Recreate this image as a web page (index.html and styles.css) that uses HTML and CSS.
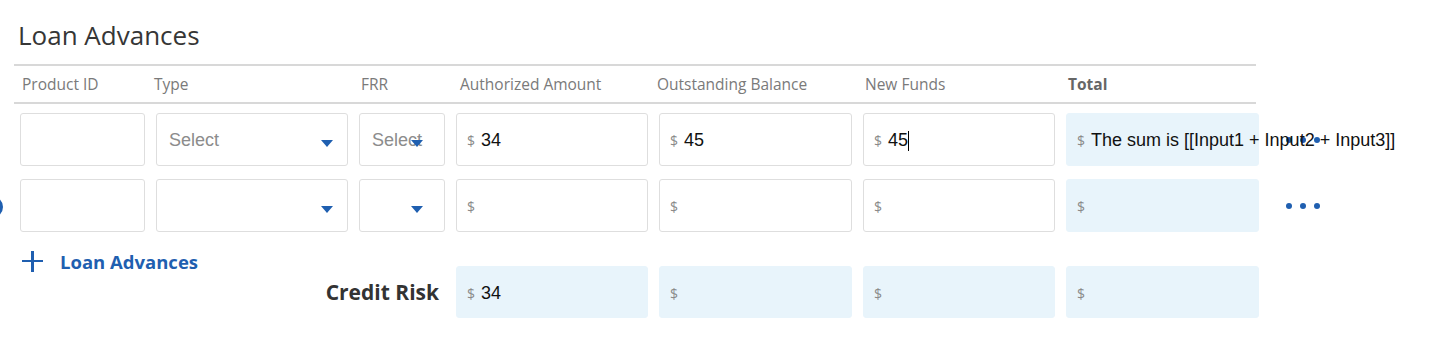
FILE: index.html
```html
<!DOCTYPE html>
<html lang="en">
<head>
  <meta charset="UTF-8" />
  <meta name="viewport" content="width=device-width, initial-scale=1.0"/>
  <title>Loan Advances</title>
  <link rel="stylesheet" href="styles.css">
</head>
<body>
  <div class="page">
    <h2 class="title">Loan Advances</h2>

    <div class="grid head">
      <div>Product ID</div>
      <div class="shift-left">Type</div>
      <div>FRR</div>
      <div class="shift-right">Authorized Amount</div>
      <div class="shift-left">Outstanding Balance</div>
      <div>New Funds</div>
      <div class="strong">Total</div>
    </div>

    <div class="grid row">
      <div class="field"></div>
      <div class="field select"><span class="placeholder">Select</span><span class="arrow"></span></div>
      <div class="field select frr"><span class="placeholder">Select</span><span class="arrow"></span></div>
      <div class="field"><span class="cur">$</span><span class="val">34</span></div>
      <div class="field"><span class="cur">$</span><span class="val">45</span></div>
      <div class="field"><span class="cur">$</span><span class="val">45</span><span class="caret"></span></div>
      <div class="field calc total"><span class="cur">$</span><span class="val">The sum is [[Input1 + Input2 + Input3]]</span></div>
      <div class="more"><span></span><span></span><span></span></div>
    </div>

    <div class="grid row">
      <div class="field with-handle"><span class="handle"></span></div>
      <div class="field select"><span class="arrow"></span></div>
      <div class="field select frr"><span class="arrow"></span></div>
      <div class="field"><span class="cur">$</span></div>
      <div class="field"><span class="cur">$</span></div>
      <div class="field"><span class="cur">$</span></div>
      <div class="field calc"><span class="cur">$</span></div>
      <div class="more"><span></span><span></span><span></span></div>
    </div>

    <div class="add-link">
      <span class="plus"></span>
      Loan Advances
    </div>

    <div class="grid row credit">
      <div class="credit-label">Credit Risk</div>
      <div class="field calc"><span class="cur">$</span><span class="val">34</span></div>
      <div class="field calc"><span class="cur">$</span></div>
      <div class="field calc"><span class="cur">$</span></div>
      <div class="field calc"><span class="cur">$</span></div>
    </div>
  </div>
</body>
</html>
```

FILE: styles.css
```css
* {
  margin: 0;
  padding: 0;
  box-sizing: border-box;
}

body {
  font-family: 'Open Sans', sans-serif;
  background: #fff;
  color: #333;
  overflow: hidden;
}

.page {
  padding: 19px 0 0 20px;
}

.title {
  font-size: 26px;
  font-weight: 400;
  line-height: 32px;
  color: #363636;
  margin-left: -2px;
  margin-bottom: 13px;
}

.grid {
  display: grid;
  grid-template-columns: 125px 192px 86px 192px 193px 192px 193px 60px;
  column-gap: 11px;
}

.head {
  width: 1242px;
  margin-left: -6px;
  padding-left: 6px;
  border-top: 2px solid #d8d8d8;
  border-bottom: 2px solid #d8d8d8;
  height: 40px;
  align-items: center;
  font-size: 15.5px;
  color: #7a7a7a;
}

.head div {
  padding-left: 2px;
}

.head .shift-left {
  padding-left: 0;
  margin-left: -2px;
}

.head .shift-right {
  padding-left: 4px;
}

.head .strong {
  font-weight: 700;
  color: #666;
}

.row {
  margin-top: 9px;
  height: 53px;
}

.row + .row {
  margin-top: 13px;
}

.field {
  position: relative;
  display: flex;
  align-items: center;
  border: 1px solid #dedede;
  border-radius: 3px;
  background: #fff;
  padding: 2px 0 0 10px;
  font-family: 'Liberation Sans', Arial, sans-serif;
  white-space: nowrap;
}

.field.calc {
  border-color: #e8f4fb;
  background: #e8f4fb;
}

.total {
  z-index: 1;
}

.cur {
  font-family: 'Open Sans', sans-serif;
  font-size: 14px;
  color: #8a8a8a;
  margin-right: 6px;
}

.val {
  font-size: 18px;
  color: #111;
}

.caret {
  width: 1px;
  height: 20px;
  background: #000;
}

.select {
  padding-left: 12px;
}

.placeholder {
  font-size: 18px;
  color: #8c8c8c;
}

.arrow {
  position: absolute;
  right: 14px;
  top: 50%;
  border-left: 6px solid transparent;
  border-right: 6px solid transparent;
  border-top: 7px solid #1f5fb0;
}

.frr .arrow {
  right: 21px;
}

.more {
  display: flex;
  align-items: center;
  gap: 8px;
  padding-left: 16px;
}

.more span {
  width: 6px;
  height: 6px;
  border-radius: 50%;
  background: #1f5fb0;
}

/* drag handle sitting just off the left edge of the page */
.handle {
  position: absolute;
  left: -40px;
  top: 16px;
  width: 22px;
  height: 22px;
  border: 4px solid #1f5fb0;
  border-radius: 50%;
}

.add-link {
  display: flex;
  align-items: center;
  gap: 17px;
  margin-top: 17px;
  height: 24px;
  font-size: 18.5px;
  font-weight: 700;
  color: #1f5fb0;
}

.plus {
  position: relative;
  width: 21px;
  height: 21px;
  margin-left: 2px;
}

.plus::before,
.plus::after {
  content: "";
  position: absolute;
  background: #1f5fb0;
}

.plus::before {
  left: 0;
  top: 9px;
  width: 21px;
  height: 2.5px;
}

.plus::after {
  left: 9px;
  top: 0;
  width: 2.5px;
  height: 21px;
}

.row.credit {
  margin-top: -7px;
  height: 52px;
}

.credit-label {
  grid-column: 1 / 4;
  justify-self: end;
  align-self: center;
  margin-right: 6px;
  font-size: 21px;
  font-weight: 700;
  color: #333;
}
```
